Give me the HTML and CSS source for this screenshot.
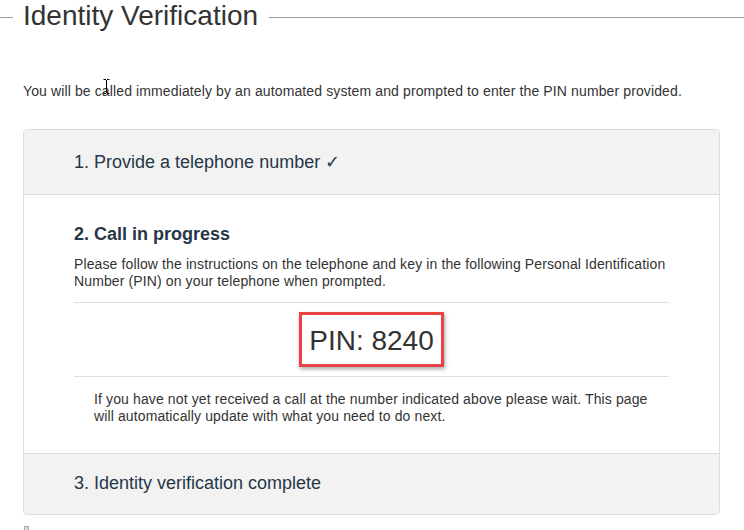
FILE: index.html
```html
<!DOCTYPE html>
<html lang="en">
<head>
<meta charset="utf-8">
<title>Identity Verification</title>
<link rel="stylesheet" href="styles.css">
</head>
<body>
<div class="title-row">
  <span class="title-line title-line-left"></span>
  <h1 class="title">Identity Verification</h1>
  <span class="title-line title-line-right"></span>
</div>
<div class="main">
  <p class="intro">You will be called immediately by an automated system and prompted to enter the PIN number provided.</p>
  <div class="panel">
    <div class="step step-done">1. Provide a telephone number ✓</div>
    <div class="step step-active">
      <h3 class="step-title">2. Call in progress</h3>
      <p class="step-text">Please follow the instructions on the telephone and key in the following Personal Identification Number (PIN) on your telephone when prompted.</p>
      <hr class="rule">
      <div class="pin-wrap"><div class="pin">PIN: 8240</div></div>
      <hr class="rule">
      <p class="note">If you have not yet received a call at the number indicated above please wait. This page will automatically update with what you need to do next.</p>
    </div>
    <div class="step step-next">3. Identity verification complete</div>
  </div>
  <div class="tiny-icon"></div>
</div>
<svg class="cursor" width="7" height="15" viewBox="0 0 7 15"><path d="M0.5 0.5h2.5M4 0.5h2.5M3.5 1v13M0.5 14.5h2.5M4 14.5h2.5" stroke="#000" stroke-width="1" fill="none"/></svg>
</body>
</html>
```
FILE: styles.css
```css
html, body {
  margin: 0;
  padding: 0;
  background: #fff;
}
body {
  font-family: "Liberation Sans", Arial, sans-serif;
  color: #333;
  position: relative;
}
.title-row {
  display: flex;
  height: 32px;
}
.title-line {
  height: 1px;
  background: #9a9a9a;
  margin-top: 17px;
}
.title-line-left {
  width: 13px;
}
.title-line-right {
  flex: 1;
}
.title {
  margin: 0 11px 0 10px;
  font-size: 28px;
  line-height: 32px;
  font-weight: normal;
  color: #333;
}
.main {
  padding: 0 24px 0 23px;
}
.intro,
.step-text,
.note {
  font-size: 14px;
  letter-spacing: 0.12px;
  line-height: 17px;
  color: #333;
}
.intro {
  margin: 51px 0 0;
}
.panel {
  margin-top: 29px;
  border: 1px solid #dcdcdc;
  border-radius: 4px;
  overflow: hidden;
}
.step {
  padding-left: 50px;
  padding-right: 50px;
  font-size: 18px;
  line-height: 20px;
  color: #263748;
}
.step-done {
  background: #f2f2f2;
  padding-top: 22px;
  padding-bottom: 22px;
  border-bottom: 1px solid #dcdcdc;
}
.step-active {
  padding-top: 29px;
  padding-bottom: 28px;
}
.step-title {
  margin: 0;
  font-size: 18px;
  line-height: 20px;
  font-weight: bold;
}
.step-text {
  margin: 12px 0 0;
}
.rule {
  margin: 12px 0 0;
  border: 0;
  border-top: 1px solid #e0e0e0;
  height: 0;
}
.pin-wrap + .rule {
  margin-top: 0;
}
.pin-wrap {
  display: flex;
  justify-content: center;
  padding: 9px 0;
}
.pin {
  border: 3px solid #ea4244;
  box-shadow: 1px 2px 4px rgba(0, 0, 0, 0.35);
  padding: 10px 7px 7px;
  font-size: 28px;
  line-height: 32px;
  color: #333;
}
.note {
  margin: 14px 20px 0;
}
.step-next {
  background: #f2f2f2;
  border-top: 1px solid #dcdcdc;
  padding-top: 19px;
  padding-bottom: 21px;
}
.tiny-icon {
  margin: 11px 0 0 1px;
  width: 3px;
  height: 3px;
  border: 1px solid #aaa;
  background: #ddd;
}
.cursor {
  position: absolute;
  left: 103px;
  top: 79px;
}
```
